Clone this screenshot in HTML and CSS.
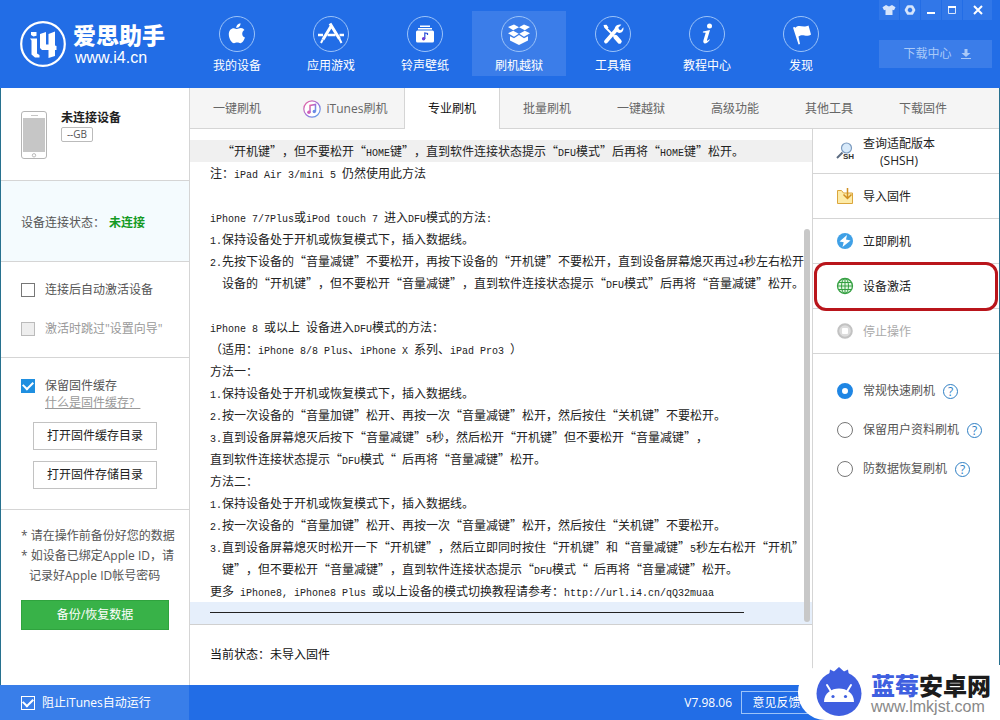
FILE: index.html
```html
<!DOCTYPE html>
<html lang="zh-CN">
<head>
<meta charset="utf-8">
<title>爱思助手</title>
<link rel="stylesheet" href="styles.css">
</head>
<body>
<div class="app">
  <header class="header">
    <div class="brand">
      <svg class="brand-mark" viewBox="0 0 46 46" aria-hidden="true">
        <circle cx="23" cy="23" r="21.8" fill="none" stroke="#fff" stroke-width="2.2"/>
        <path fill="#fff" d="M11 11h5.500v3.700l-3 .800-2.500-1.600zM10 17.500h7v15l2.500 1.500v2.500h-4.500l-3.500-3v-14zM20 13l6-2v12.500h2.500V13l6.500-2.500v14l1.500.5v4H35v6l-6.500 2v-8H22l-2-2z"/>
      </svg>
      <div class="brand-text">
        <strong class="brand-name">爱思助手</strong>
        <span class="brand-url">www.i4.cn</span>
      </div>
    </div>
    <nav class="nav">
      <button class="nav-item" type="button">
        <svg viewBox="0 0 36 36" aria-hidden="true"><circle class="ring" cx="18" cy="18" r="17.500"/><path fill="#fff" d="M21.500 7.200c.2 2.700-1.900 4.800-4.200 4.700-.2-2.300 1.900-4.500 4.200-4.700zM18 13c1 0 2.200-1 3.900-1 1.600 0 2.800.8 3.500 1.900-3.200 2-2.700 6.300.6 7.700-.7 2.200-2.600 5.600-4.600 5.600-1.200 0-1.700-.7-3.200-.7s-2.100.7-3.200.7c-2.200 0-5.200-4.600-5.200-9 0-3.700 2.300-6 5-6 1.400 0 2.300.8 3.200.8z"/></svg>
        <span>我的设备</span>
      </button>
      <button class="nav-item" type="button">
        <svg viewBox="0 0 36 36" aria-hidden="true"><circle class="ring" cx="18" cy="18" r="17.500"/><g stroke="#fff" fill="none"><path stroke-width="3" d="M17 7.500l9.500 15.500M18.500 9.500L10 23.500"/><path stroke-width="2" d="M9.800 23.500L8 27M26.500 23l2 4"/><path stroke-width="2.600" d="M5 19h5M14.500 19h8M26.500 19h4.500"/></g></svg>
        <span>应用游戏</span>
      </button>
      <button class="nav-item" type="button">
        <svg viewBox="0 0 36 36" aria-hidden="true"><circle class="ring" cx="18" cy="18" r="17.500"/><g fill="#fff"><rect x="13" y="9.500" width="10" height="1.500"/><rect x="11" y="12" width="14" height="1.500"/><rect x="9" y="14.500" width="18" height="12" rx="1.500"/></g><path d="M17.800 23V17l2.700.5v1.500" stroke="#2b4fd8" stroke-width="1.200" fill="none"/><circle cx="16.600" cy="22.800" r="1.700" fill="#6a3fd8"/></svg>
        <span>铃声壁纸</span>
      </button>
      <button class="nav-item active" type="button">
        <svg viewBox="0 0 36 36" aria-hidden="true"><circle class="ring" cx="18" cy="18" r="17.500"/><g fill="#fff"><path d="M13 8.500l5 2.700-5.800 3L7 11zM23 8.500l-5 2.700 5.800 3L29 11zM12.200 14.700l5.500 3-4.700 3-6-3.500zM23.800 14.700l-5.500 3 4.700 3 6-3.500z"/><path d="M9 20.200l4 2 5-3.200 5 3.200 4-2v4.300L18 29l-9-4.500z"/></g></svg>
        <span>刷机越狱</span>
      </button>
      <button class="nav-item" type="button">
        <svg viewBox="0 0 36 36" aria-hidden="true"><circle class="ring" cx="18" cy="18" r="17.500"/><g stroke="#fff" stroke-linecap="round"><path stroke-width="3.800" d="M21.500 13.500L11 25.500"/><path stroke-width="1.800" d="M10.500 11.500l8 8"/><path stroke-width="4.400" d="M20.500 21l4 4.500"/></g><path fill="#fff" d="M8.500 9l3-.2 2 2.700-1.300 1.500-3-1.500zM26.300 8.800l-3 3 .8 1.800 1.800.6 2.400-3c.9 3.300-1.600 6.300-5 5.600l-3.500-2.300c-1-3.500 2.800-7 6.500-5.700z"/></svg>
        <span>工具箱</span>
      </button>
      <button class="nav-item" type="button">
        <svg viewBox="0 0 36 36" aria-hidden="true"><circle class="ring" cx="18" cy="18" r="17.500"/><circle cx="20.500" cy="10" r="2.500" fill="#fff"/><path fill="#fff" d="M14 15.500l7-1.500-3 10c-.2 1 .7 1 2.200-.8l.7.600c-2.800 4.600-7.500 4.800-6.500.8l2.300-7.800-2.900-.3z"/></svg>
        <span>教程中心</span>
      </button>
      <button class="nav-item" type="button">
        <svg viewBox="0 0 36 36" aria-hidden="true"><circle class="ring" cx="18" cy="18" r="17.500"/><path fill="#fff" d="M10 11.500l1.500-.5 1 .8c4-4 7 .7 13-2.300l2.500 9c-5 3.500-8-1.500-12.500 2l1.500 7.500-1.500.5z"/></svg>
        <span>发现</span>
      </button>
    </nav>
    <div class="header-side">
      <div class="window-controls">
        <button type="button" aria-label="皮肤"><svg viewBox="0 0 14 12"><path fill="#d6e5fc" d="M4 1l3 1.500L10 1l3.500 2.200-1.500 3-1.500-.5V11h-7V5.700L2 6.200.5 3.200z"/></svg></button>
        <button type="button" aria-label="设置"><svg viewBox="0 0 14 12"><path fill="none" stroke="#d6e5fc" stroke-width="2.600" stroke-linejoin="round" d="M5 2.500h4L11 6 9 9.500H5L3 6z"/></svg></button>
        <button type="button" aria-label="最小化"><svg viewBox="0 0 14 12"><path fill="#fff" d="M3 8h8v2H3z"/></svg></button>
        <button type="button" aria-label="最大化"><svg viewBox="0 0 14 12"><path fill="none" stroke="#d6e5fc" d="M3.500 3v6.500h7V3"/><path fill="#fff" d="M3 2h8v2H3z"/></svg></button>
        <button class="close" type="button" aria-label="关闭"><svg viewBox="0 0 14 12"><path stroke="#fff" stroke-width="2" d="M3 2l8 8M11 2l-8 8"/></svg></button>
      </div>
      <button class="download" type="button">下载中心
        <svg viewBox="0 0 12 12" aria-hidden="true"><path fill="currentColor" d="M4.500 1h3v4h3L6 9 1.500 5h3zM1 10h10v1H1z"/></svg>
      </button>
    </div>
  </header>

  <div class="body">
    <aside class="sidebar">
      <section class="device">
        <svg class="phone" viewBox="0 0 26 48" aria-hidden="true"><rect x=".5" y=".5" width="25" height="47" rx="2.500" fill="#fff" stroke="#b5b5b5"/><rect x="2" y="7" width="22" height="34" fill="#c6c6c6"/><path stroke="#c6c6c6" d="M10 4.500h7"/><circle cx="13" cy="44.300" r="1.700" fill="none" stroke="#bbb"/></svg>
        <div>
          <h2>未连接设备</h2>
          <span class="capacity">--GB</span>
        </div>
      </section>
      <section class="connection">设备连接状态：<strong>未连接</strong></section>
      <section class="options">
        <label class="check"><input type="checkbox">连接后自动激活设备</label>
        <label class="check off"><input type="checkbox" disabled>激活时跳过"设置向导"</label>
      </section>
      <section class="cache">
        <label class="check"><input type="checkbox" checked>保留固件缓存</label>
        <a href="#">什么是固件缓存?&nbsp;&nbsp;</a>
        <button type="button">打开固件缓存目录</button>
        <button type="button">打开固件存储目录</button>
      </section>
      <section class="notes">
        <p>* 请在操作前备份好您的数据</p>
        <p>* 如设备已绑定Apple ID，请</p>
        <p class="cont">记录好Apple ID帐号密码</p>
        <button type="button">备份/恢复数据</button>
      </section>
    </aside>

    <main class="main">
      <nav class="tabs">
        <button type="button">一键刷机</button>
        <button class="wide" type="button">
          <svg viewBox="0 0 18 18" aria-hidden="true"><defs><linearGradient id="note" x1="0" y1="0" x2="1" y2="1"><stop offset="0" stop-color="#f0609a"/><stop offset=".5" stop-color="#a070d8"/><stop offset="1" stop-color="#50a8ee"/></linearGradient></defs><circle cx="9" cy="9" r="8.200" fill="#fff" stroke="url(#note)" stroke-width="1.200"/><path d="M7 12.500V5.500l5.500-1v7" fill="none" stroke="url(#note)" stroke-width="1.500"/><circle cx="5.900" cy="12.300" r="1.700" fill="#d060b8"/><circle cx="11.300" cy="11.500" r="1.700" fill="#6c8ae4"/></svg>
          iTunes刷机</button>
        <button class="active" type="button">专业刷机</button>
        <button type="button">批量刷机</button>
        <button type="button">一键越狱</button>
        <button type="button">高级功能</button>
        <button type="button">其他工具</button>
        <button type="button">下载固件</button>
      </nav>
      <div class="work">
        <div class="center">
          <div class="log">
            <p class="hover"><span>  </span>“开机键”，但不要松开“<span>HOME</span>键”，直到软件连接状态提示“<span>DFU</span>模式”后再将“<span>HOME</span>键”松开。</p>
            <p>注：<span>iPad Air 3/mini 5 </span>仍然使用此方法</p>
            <p> </p>
            <p><span>iPhone 7/7Plus</span>或<span>iPod touch 7 </span>进入<span>DFU</span>模式的方法<span>:</span></p>
            <p><span>1.</span>保持设备处于开机或恢复模式下，插入数据线。</p>
            <p><span>2.</span>先按下设备的“音量减键”不要松开，再按下设备的“开机键”不要松开，直到设备屏幕熄灭再过<span>4</span>秒左右松开</p>
            <p><span>  </span>设备的“开机键”，但不要松开“音量减键”，直到软件连接状态提示“<span>DFU</span>模式”后再将“音量减键”松开。</p>
            <p> </p>
            <p><span>iPhone 8 </span>或以上<span> </span>设备进入<span>DFU</span>模式的方法：</p>
            <p>（适用：<span>iPhone 8/8 Plus</span>、<span>iPhone X </span>系列、<span>iPad Pro3 </span>）</p>
            <p>方法一：</p>
            <p><span>1.</span>保持设备处于开机或恢复模式下，插入数据线。</p>
            <p><span>2.</span>按一次设备的“音量加键”松开、再按一次“音量减键”松开，然后按住“关机键”不要松开。</p>
            <p><span>3.</span>直到设备屏幕熄灭后按下“音量减键”<span>5</span>秒，然后松开“开机键”但不要松开“音量减键”，</p>
            <p>直到软件连接状态提示“<span>DFU</span>模式“<span> </span>后再将“音量减键”松开。</p>
            <p>方法二：</p>
            <p><span>1.</span>保持设备处于开机或恢复模式下，插入数据线。</p>
            <p><span>2.</span>按一次设备的“音量加键”松开、再按一次“音量减键”松开，然后按住“关机键”不要松开。</p>
            <p><span>3.</span>直到设备屏幕熄灭时松开一下“开机键”，然后立即同时按住“开机键”和“音量减键”<span>5</span>秒左右松开“开机”</p>
            <p><span>  </span>键”，但不要松开“音量减键”，直到软件连接状态提示“<span>DFU</span>模式“<span> </span>后再将“音量减键”松开。</p>
            <p>更多<span> iPhone8, iPhone8 Plus </span>或以上设备的模式切换教程请参考：<span>http://url.i4.cn/qQ32muaa</span></p>
            <div class="selected"><hr></div>
            <div class="thumb"></div>
          </div>
          <p class="status">当前状态：未导入固件</p>
        </div>
        <aside class="actions">
          <button type="button">
            <svg viewBox="0 0 18 18" aria-hidden="true"><circle cx="10.500" cy="6" r="5" fill="#d8eafa" stroke="#7d9cc0" stroke-width="1.200"/><path d="M6.500 10.500L1 16" stroke="#5b6b80" stroke-width="2"/><text x="7" y="17" class="tiny">SH</text></svg>
            <span class="two">查询适配版本<br>(SHSH)</span>
          </button>
          <button type="button">
            <svg viewBox="0 0 18 18" aria-hidden="true"><path d="M1.500 3.500h4l2 2.500h9v10.500h-15z" fill="#fdeba8" stroke="#dba63c"/><path d="M11.500 1v10M7.500 7.500l4 4 4-4" fill="none" stroke="#d08f20" stroke-width="1.500"/></svg>
            <span>导入固件</span>
          </button>
          <button type="button">
            <svg viewBox="0 0 18 18" aria-hidden="true"><circle cx="9" cy="9" r="8" fill="#3fa0e6"/><path fill="#fff" d="M11 3L3.500 9.500l4.200.8L6.500 15l8-6.500-4.500-1z"/></svg>
            <span>立即刷机</span>
          </button>
          <button class="marked" type="button">
            <svg viewBox="0 0 18 18" aria-hidden="true"><g fill="none" stroke="#36a043"><circle cx="9" cy="9" r="7.500" fill="#e2f6e2" stroke-width="1.300"/><ellipse cx="9" cy="9" rx="3.500" ry="7.500"/><path d="M9 1.500v15M1.500 9h15M2.500 5.500h13M2.500 12.500h13"/></g></svg>
            <span>设备激活</span>
          </button>
          <button type="button" disabled>
            <svg viewBox="0 0 18 18" aria-hidden="true"><circle cx="9" cy="9" r="6.800" fill="#ddd" stroke="#c2c2c2" stroke-width="2"/><rect x="6" y="6" width="6" height="6" rx="1" fill="#fff"/></svg>
            <span>停止操作</span>
          </button>
          <div class="modes">
            <div><label><input type="radio" name="mode" checked>常规快速刷机</label><button type="button" class="help" aria-label="常规快速刷机说明">?</button></div>
            <div><label><input type="radio" name="mode">保留用户资料刷机</label><button type="button" class="help" aria-label="保留用户资料刷机说明">?</button></div>
            <div><label><input type="radio" name="mode">防数据恢复刷机</label><button type="button" class="help" aria-label="防数据恢复刷机说明">?</button></div>
          </div>
        </aside>
      </div>
    </main>
  </div>

  <footer class="footer">
    <label class="footer-left"><input type="checkbox" checked>阻止iTunes自动运行</label>
    <div class="footer-right">
      <span>V7.98.06</span>
      <button type="button">意见反馈</button>
    </div>
  </footer>

  <div class="watermark">
    <svg viewBox="0 0 46 50" aria-hidden="true">
      <path fill="#3f5fe0" d="M13 9l1-6.500L18 4.500 23 0l5 4.500 4-2L33 9z"/>
      <circle cx="23" cy="26.500" r="22.500" fill="#3f5fe0"/>
      <path fill="#fff" d="M8 35c0-18 30-18 30 0z"/>
      <path stroke="#fff" stroke-width="2" stroke-linecap="round" d="M11 18l4 6.500M35 18l-4 6.500"/>
      <circle cx="17" cy="29.500" r="1.600" fill="#3f5fe0"/><circle cx="29.500" cy="29.500" r="1.600" fill="#3f5fe0"/>
    </svg>
    <div>
      <strong><em>蓝莓</em>安卓网</strong>
      <span>www.lmkjst.com</span>
    </div>
  </div>
</div>
</body>
</html>
```

FILE: styles.css
```css
* { box-sizing: border-box; }
body, p, h2, hr { margin: 0; }
body {
  font: 12px/18px "Open Sans", "Noto Sans CJK SC", sans-serif;
  color: #555;
  text-spacing-trim: space-all;
}
button {
  font: inherit;
  color: inherit;
  border: 0;
  padding: 0;
  background: none;
}
svg { display: block; flex: none; }
.app {
  position: relative;
  min-height: 100vh;
  display: flex;
  flex-direction: column;
  overflow: hidden;
}

/* header */
.header {
  display: flex;
  height: 88px;
  background: #226de6;
  color: #fff;
}
.brand {
  display: flex;
  align-items: center;
  gap: 7px;
  width: 190px;
  padding-left: 20px;
}
.brand-mark { width: 46px; height: 46px; }
.brand-text { display: flex; flex-direction: column; }
.brand-name { font-size: 23px; line-height: 27px; font-weight: 900; }
.brand-url { font: 16px/17px "Liberation Sans", sans-serif; padding-left: 2px; }
.nav { display: flex; padding-top: 11px; }
.nav-item {
  display: flex;
  flex-direction: column;
  align-items: center;
  gap: 5px;
  width: 94px;
  height: 65px;
  padding-top: 5px;
}
.nav-item svg { width: 36px; height: 36px; }
.nav-item.active { background: #3b7de9; }
.ring { fill: none; stroke: #9cc3f8; }
.header-side {
  display: flex;
  flex-direction: column;
  gap: 20px;
  width: 113px;
  margin: 0 8px 0 auto;
}
.window-controls { display: flex; gap: 1px; }
.window-controls button {
  display: flex;
  align-items: center;
  justify-content: center;
  width: 20px;
  height: 20px;
  background: #3177e8;
}
.window-controls .close { flex: 1; }
.window-controls svg { width: 14px; height: 12px; }
.download {
  display: flex;
  align-items: center;
  justify-content: center;
  gap: 8px;
  height: 28px;
  padding-left: 4px;
  background: #3b7de9;
  color: #a9c9f8;
}
.download svg { width: 12px; height: 12px; }

/* body */
.body {
  flex: 1;
  display: flex;
  border: solid #27718f;
  border-width: 0 1px;
  background: #fff;
}
.sidebar { width: 189px; border-right: 1px solid #d5d5d5; }
.sidebar section { border-bottom: 1px solid #d5d5d5; padding: 0 20px; }
.sidebar section:last-child { border: 0; }
.device { display: flex; gap: 14px; height: 93px; }
.sidebar .device { padding-top: 20px; }
.phone { width: 26px; height: 48px; margin-top: 3px; }
.device h2 { font-size: 12px; line-height: 19px; color: #222; }
.capacity {
  display: block;
  width: 32px;
  border: 1px solid #bbb;
  border-radius: 2px;
  font-size: 10px;
  line-height: 13px;
  text-align: center;
}
.connection { height: 81px; line-height: 84px; background: #f4fbfe; }
.connection strong { color: #149a24; margin-left: 4px; }
.options { height: 96px; display: flex; flex-direction: column; gap: 21px; }
.sidebar .options { padding-top: 19px; }
.check { display: flex; align-items: center; gap: 10px; white-space: nowrap; }
.check.off { color: #999; }
input { appearance: none; margin: 0; flex: none; background: #fff; }
input[type="checkbox"] { display: grid; place-items: center; width: 14px; height: 14px; border: 1px solid #777; }
input[type="checkbox"]:disabled { background: #eee; border-color: #bbb; }
.check input:checked { background: #1f8fe0; border-color: #1f8fe0; }
input[type="checkbox"]:checked::before {
  content: "";
  width: 8px;
  height: 5px;
  margin-bottom: 3px;
  border: solid #fff;
  border-width: 0 0 2px 2px;
  transform: rotate(-45deg);
}
.cache { display: flex; flex-direction: column; height: 152px; }
.sidebar .cache { padding-top: 19px; }
.cache a { margin: -1px 0 0 24px; color: #999; align-self: flex-start; }
.cache button {
  width: 124px;
  height: 28px;
  margin: 10px 0 0 12px;
  border: 1px solid #c2c2c2;
  background: #fff;
  color: #222;
}
.cache button + button { margin-top: 11px; }
.notes { white-space: nowrap; line-height: 20px; }
.sidebar .notes { padding-top: 16px; }
.notes .cont { padding-left: 8px; }
.notes button {
  width: 100%;
  height: 30px;
  margin-top: 14px;
  border: 1px solid #2fa33e;
  background: #38b248;
  color: #fff;
}

/* tabs */
.main { flex: 1; min-width: 0; display: flex; flex-direction: column; }
.tabs { display: flex; height: 41px; background: #f5f5f5; border-bottom: 1px solid #d5d5d5; color: #666; }
.tabs button { display: flex; align-items: center; justify-content: center; gap: 6px; width: 94px; height: 41px; }
.tabs svg { width: 18px; height: 18px; }
.tabs .wide { width: 120px; padding-left: 2px; }
.tabs .active {
  width: 96px;
  border: solid #d5d5d5;
  border-width: 0 1px;
  background: #fff;
  color: #111;
}

/* log */
.work { flex: 1; display: flex; }
.center { flex: 1; min-width: 0; }
.log {
  position: relative;
  padding-top: 11px;
  overflow: hidden;
  border-bottom: 1px solid #d0d0d0;
  font-family: "Noto Sans CJK SC", sans-serif;
  color: #222;
}
.log p { height: 22px; line-height: 22px; padding-left: 20px; white-space: pre; }
.log span { font: 10px/10px "Liberation Mono", monospace; }
.log .hover { background: #f0f0f0; }
.selected { height: 22px; padding: 10px 68px 0 20px; background: #e6effb; }
.selected hr { border: 0; height: 1px; background: #222; }
.thumb { position: absolute; right: 2px; top: 100px; bottom: 2px; width: 6px; border-radius: 3px; background: #c8c8c8; }
.status { padding: 21px 20px; color: #111; }

/* actions */
.actions { width: 187px; border-left: 1px solid #d5d5d5; }
.actions > button {
  position: relative;
  display: flex;
  align-items: center;
  gap: 9px;
  width: 100%;
  height: 45px;
  padding-left: 23px;
  border-bottom: 1px solid #d5d5d5;
  color: #222;
}
.actions > button:disabled { color: #aaa; }
.actions > button span { padding-top: 2px; }
.actions svg { width: 18px; height: 18px; }
.tiny { font: bold 8px "Liberation Sans", sans-serif; fill: #333; }
.two { line-height: 17px; text-align: center; }
.marked::after {
  content: "";
  position: absolute;
  inset: -2px 1px -3px 1px;
  border: 3px solid #b9151b;
  border-radius: 12px;
}
.modes { display: flex; flex-direction: column; gap: 21px; padding: 28px 0 0 24px; }
.modes div { display: flex; align-items: center; gap: 8px; white-space: nowrap; }
.modes label { display: flex; align-items: center; gap: 10px; }
input[type="radio"] { width: 16px; height: 16px; border: 1px solid #777; border-radius: 50%; }
input[type="radio"]:checked { border: 5px solid #1f86e4; }
.help { width: 15px; height: 15px; border: 1px solid #2f7fc4; border-radius: 50%; color: #2f7fc4; font-size: 12px; line-height: 13px; }

/* footer */
.footer { display: flex; height: 35px; background: #226de6; color: #fff; }
.footer-left { display: flex; align-items: center; gap: 7px; width: 189px; padding-left: 21px; background: #397ee9; }
.footer-left input { background: none; }
.footer .footer-left input { border-color: #fff; }
.footer-right { display: flex; align-items: center; gap: 9px; margin: 0 188px 0 auto; }
.footer-right button { width: 71px; height: 23px; border: 1px solid #9cc3f8; }

/* site mark */
.watermark {
  position: absolute;
  right: 0;
  bottom: 0;
  display: flex;
  gap: 9px;
  width: 202px;
  height: 55px;
  padding: 2px 0 0 18px;
  border-radius: 27px 0 0 27px;
  background: #fff;
}
.watermark svg { width: 46px; height: 50px; }
.watermark div { display: flex; flex-direction: column; padding-top: 6px; }
.watermark strong { font-size: 24px; line-height: 26px; font-weight: 900; color: #1c1c1c; white-space: nowrap; }
.watermark em { font-style: normal; color: #3f5fe0; }
.watermark span { font: 16px/16px "Liberation Sans", sans-serif; color: #888; }
```
